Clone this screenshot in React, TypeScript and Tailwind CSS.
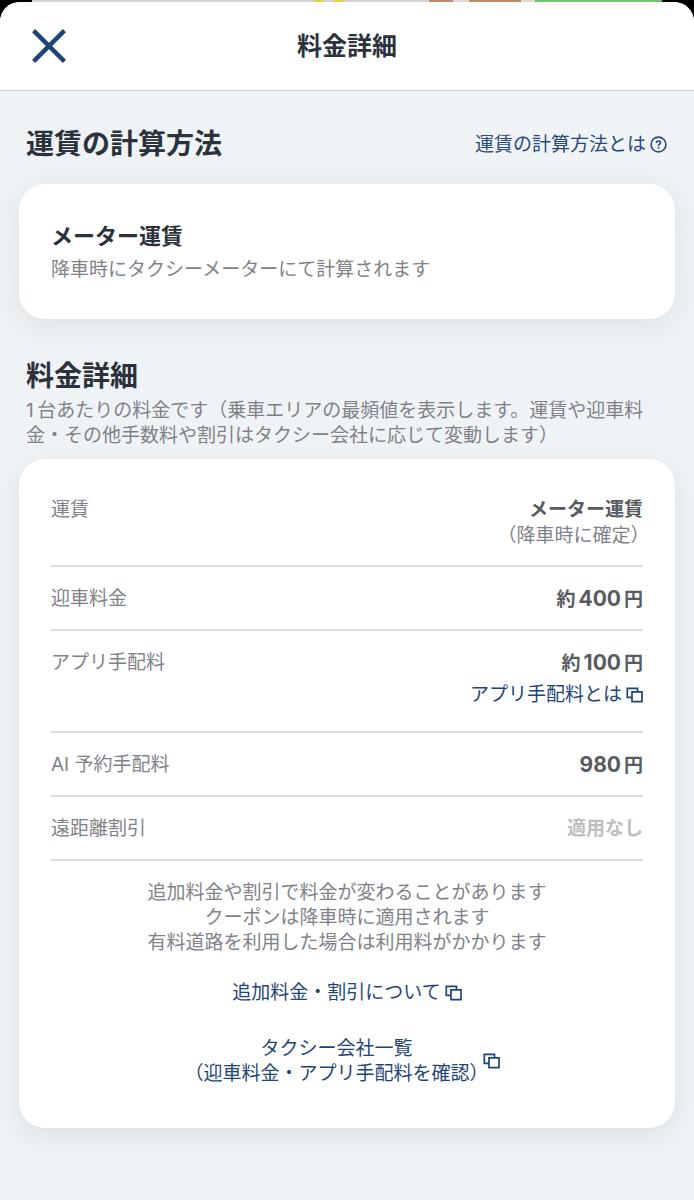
import React from 'react';

interface IconProps {
    className?: string;
}

const CloseIcon: React.FC<IconProps> = ({ className }) => (
    <svg viewBox="0 0 34 34" fill="none" stroke="currentColor" strokeWidth="4.4" className={className} aria-hidden="true">
        <path d="M1.6 1.6L32.4 32.4M32.4 1.6L1.6 32.4" />
    </svg>
);

const HelpIcon: React.FC<IconProps> = ({ className }) => (
    <svg viewBox="0 0 17 17" fill="none" stroke="currentColor" strokeWidth="1.6" className={className} aria-hidden="true">
        <circle cx="8.5" cy="8.5" r="7.4" />
        <path d="M6.5 7C6.5 5.8 7.3 5 8.5 5S10.5 5.7 10.5 6.8C10.5 8.2 8.5 8.2 8.5 9.9" />
        <path d="M8.5 11.1V12.8" />
    </svg>
);

const WindowIcon: React.FC<IconProps> = ({ className }) => (
    <svg viewBox="0 0 17 16" fill="none" stroke="currentColor" strokeWidth="1.7" className={className} aria-hidden="true">
        <path d="M6 10.4H1.3V1.3H11.5V4.9" />
        <path d="M6 4.9H16V14.6H6Z" />
    </svg>
);

// Full-width parentheses set half-width, so they sit tight against the text
const Paren: React.FC<{ children: React.ReactNode }> = ({ children }) => (
    <>
        <span className="[font-feature-settings:'halt']">（</span>
        {children}
        <span className="[font-feature-settings:'halt']">）</span>
    </>
);

const Price: React.FC<{ amount: string; approx?: boolean }> = ({ amount, approx }) => (
    <span className="flex h-[26px] items-baseline gap-[3px]">
        {approx && <span>約</span>}
        <span className="text-[21px]">{amount}</span>
        <span>円</span>
    </span>
);

interface FeeRowProps {
    label: string;
    children: React.ReactNode;
    note?: React.ReactNode;
    muted?: boolean;
}

const FeeRow: React.FC<FeeRowProps> = ({ label, children, note, muted }) => (
    <div className="flex items-start justify-between border-b-2 border-[#dcdcdf] pt-[19px] pb-[17px]">
        <dt className="leading-[26px] text-[#808288]">{label}</dt>
        <dd className="flex flex-col items-end">
            <span className={muted ? 'font-bold leading-[26px] text-[#bdbec1]' : 'font-bold leading-[26px] text-[#565b62]'}>
                {children}
            </span>
            {note}
        </dd>
    </div>
);

// Slice of the map that stays visible above the sheet
const MapEdge: React.FC = () => (
    <div className="flex h-[2px] w-full px-8" aria-hidden="true">
        <div className="grow-[280] bg-[#d5d2d5]" />
        <div className="grow-[10] bg-[#e6cf4a]" />
        <div className="grow-[10] bg-[#d5d2d5]" />
        <div className="grow-[10] bg-[#e6cf4a]" />
        <div className="grow-[84] bg-[#d5d2d5]" />
        <div className="grow-[24] bg-[#c08a62]" />
        <div className="grow-[16] bg-[#dedadc]" />
        <div className="grow-[52] bg-[#c08a62]" />
        <div className="grow-[14] bg-[#dedadc]" />
        <div className="grow-[126] bg-[#6fc26c]" />
    </div>
);

export default function App() {
    return (
        <div className="flex min-h-screen flex-col bg-black font-[Inter,'Noto_Sans_CJK_JP',sans-serif] text-[19px] leading-[25px]" lang="ja">
            <MapEdge />
            <div className="flex grow flex-col overflow-hidden rounded-t-[20px] bg-[#eff3f6]">
                <header className="grid grid-cols-[1fr_auto_1fr] items-center border-b border-[#cfd1d4] bg-white px-8 py-[25px]">
                    <button type="button" aria-label="閉じる" className="justify-self-start text-[#1f4577]">
                        <CloseIcon className="size-[34px]" />
                    </button>
                    <h1 className="text-[25px] font-bold leading-[38px] text-[#2b323c]">料金詳細</h1>
                </header>

                <main className="px-[19px] pt-[35px] pb-[72px]">
                    <section>
                        <div className="flex items-center justify-between pr-2 pl-[7px]">
                            <h2 className="text-[28px] font-bold leading-9 text-[#2b323c]">運賃の計算方法</h2>
                            <a href="#calculation" className="flex items-center gap-1 text-[#2a4a7c]">
                                運賃の計算方法とは
                                <HelpIcon className="size-[17px]" />
                            </a>
                        </div>
                        <div className="mt-[22px] rounded-[26px] bg-white px-8 pt-9 pb-8 shadow-[0_6px_32px_rgba(0,0,0,0.08)]">
                            <h3 className="text-[22px] font-bold leading-[33px] text-[#2b323c]">メーター運賃</h3>
                            <p className="leading-[34px] text-[#808288]">降車時にタクシーメーターにて計算されます</p>
                        </div>
                    </section>

                    <section className="mt-[39px]">
                        <div className="pr-4 pl-[7px]">
                            <h2 className="text-[28px] font-bold leading-9 text-[#2b323c]">料金詳細</h2>
                            <p className="mt-1 text-[#808288]">
                                1&thinsp;台あたりの料金です（乗車エリアの最頻値を表示します。運賃や迎車料金・その他手数料や割引はタクシー会社に応じて変動します）
                            </p>
                        </div>

                        <div className="mt-[11px] rounded-[26px] bg-white px-8 pt-[19px] pb-[42px] shadow-[0_8px_28px_rgba(0,0,0,0.08)]">
                            <dl>
                                <FeeRow
                                    label="運賃"
                                    note={<span className="pr-[3px] text-[#808288]"><Paren>降車時に確定</Paren></span>}
                                >
                                    メーター運賃
                                </FeeRow>
                                <FeeRow label="迎車料金">
                                    <Price amount="400" approx />
                                </FeeRow>
                                <FeeRow
                                    label="アプリ手配料"
                                    note={
                                        <a href="#app-fee" className="mt-[6px] mb-[7px] flex items-center gap-1 text-[#1f4577]">
                                            アプリ手配料とは
                                            <WindowIcon className="h-4 w-[17px]" />
                                        </a>
                                    }
                                >
                                    <Price amount="100" approx />
                                </FeeRow>
                                <FeeRow label="AI 予約手配料">
                                    <Price amount="980" />
                                </FeeRow>
                                <FeeRow label="遠距離割引" muted>適用なし</FeeRow>
                            </dl>

                            <p className="mt-[19px] text-center text-[#808288]">
                                追加料金や割引で料金が変わることがあります
                                <br />
                                クーポンは降車時に適用されます
                                <br />
                                有料道路を利用した場合は利用料がかかります
                            </p>

                            <div className="mt-[25px] flex flex-col items-center gap-[31px] text-[#1f4577]">
                                <a href="#extra-fees" className="flex items-center gap-1">
                                    追加料金・割引について
                                    <WindowIcon className="h-4 w-[17px]" />
                                </a>
                                <a href="#companies" className="flex items-center gap-1 text-center">
                                    <span>
                                        タクシー会社一覧
                                        <br />
                                        <Paren>迎車料金・アプリ手配料を確認</Paren>
                                    </span>
                                    <WindowIcon className="h-4 w-[17px]" />
                                </a>
                            </div>
                        </div>
                    </section>
                </main>
            </div>
        </div>
    );
}
